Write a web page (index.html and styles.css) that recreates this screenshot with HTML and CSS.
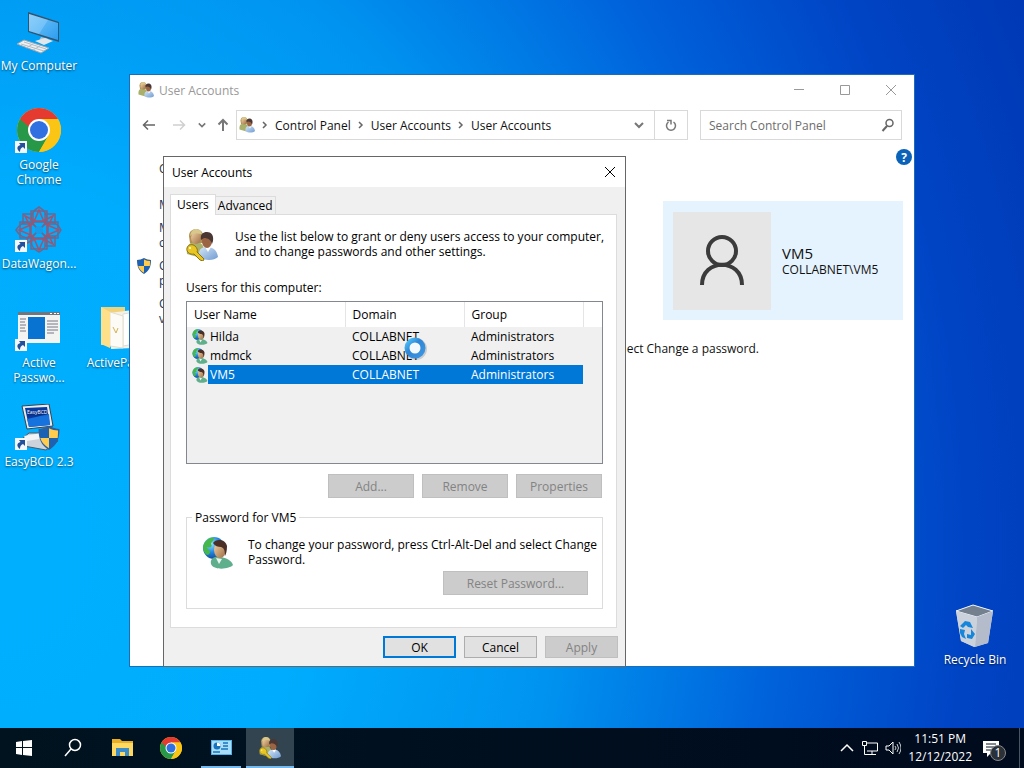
FILE: index.html
```
<!DOCTYPE html>
<html lang="en">
<head>
  <meta charset="UTF-8">
  <meta name="viewport" content="width=device-width, initial-scale=1.0">
  <title>User Accounts</title>
  <link rel="stylesheet" href="styles.css">
</head>
<body>

  <!-- shared icons -->
  <svg class="defs" aria-hidden="true">
    <defs>
      <linearGradient id="skin" x1="0" y1="0" x2="1" y2="1">
        <stop offset="0" stop-color="#f3d3a8"/>
        <stop offset="1" stop-color="#9c6b42"/>
      </linearGradient>
      <linearGradient id="screen" x1="0" y1="0" x2="1" y2="1">
        <stop offset="0" stop-color="#7cc8f8"/>
        <stop offset="1" stop-color="#2b9df0"/>
      </linearGradient>
      <radialGradient id="globe" cx="0.35" cy="0.3" r="0.8">
        <stop offset="0" stop-color="#9be4ff"/>
        <stop offset="0.5" stop-color="#2386dd"/>
        <stop offset="1" stop-color="#0a3a8c"/>
      </radialGradient>
      <linearGradient id="shirt" x1="0" y1="0" x2="1" y2="1">
        <stop offset="0" stop-color="#d5e6f8"/>
        <stop offset="1" stop-color="#6f9bd0"/>
      </linearGradient>
      <linearGradient id="ring" x1="0" y1="0" x2="1" y2="1">
        <stop offset="0" stop-color="#4fc3fa"/>
        <stop offset="0.4" stop-color="#2f86d6"/>
        <stop offset="1" stop-color="#3c95e2"/>
      </linearGradient>
      <symbol id="users" viewBox="0 0 32 32">
        <path d="M1 25c-1-8 2-12 9-12 5 0 8 3 8 9l-3 7z" fill="#a9b06a"/>
        <path d="M3 7c0-5 4-7 7-7s7 2 7 7v7H4z" fill="#b3904f"/>
        <ellipse cx="10" cy="9" rx="5" ry="6" fill="url(#skin)"/>
        <path d="M4 7c1-5 3-7 6-7s6 2 6 6c-3-2-8-3-12 1z" fill="#d8c88c"/>
        <path d="M13 28c-1-7 2-10 8-10 7 0 10 4 11 10-4 4-14 4-19 0z" fill="url(#shirt)"/>
        <path d="M19 18l3 5 3-5z" fill="#fff"/>
        <ellipse cx="21" cy="12" rx="5" ry="7" fill="#9b6544"/>
        <path d="M15 11c-1-6 2-8 6-8s7 3 6 9l-1 3c-1-4-4-6-8-6z" fill="#4a3733"/>
      </symbol>
      <symbol id="userskey" viewBox="0 0 32 32">
        <use href="#users"/>
        <path d="M1 19c1-4 6-4 8-2s3 4 2 6l7 7-1 2-3-1-6-6c-4 1-8-2-7-6z" fill="#e9c622" stroke="#8e730d"/>
        <circle cx="4" cy="19" r="1" fill="#fff"/>
      </symbol>
      <symbol id="globeuser" viewBox="0 0 32 32">
        <circle cx="12" cy="11" r="11" fill="url(#globe)"/>
        <path d="M3 5c3-4 7-5 9-4 0 3-3 4-3 6 2 3-1 4-4 3-1 2 4 3 3 6-2 3-4 2-5 0C0 12 1 8 3 5z" fill="#46b84a"/>
        <path d="M9 27c-1-4 2-8 8-7 7 0 13 4 14 8-3 4-19 6-22-1z" fill="#5fae8c"/>
        <path d="M14 21l3 6 3-5z" fill="#e8f6ef"/>
        <ellipse cx="18" cy="13" rx="6" ry="8" fill="url(#skin)"/>
        <path d="M11 6c3-5 13-4 14 3 0 5-1 8-2 10 0-6-1-8-4-9-3 0-6-1-8-4z" fill="#4b2f26"/>
      </symbol>
      <symbol id="chrome" viewBox="0 0 44 44">
        <circle cx="22" cy="22" r="22" fill="#fbc516"/>
        <path d="M3 11l9.500 16.500L22 22V11h19A22 22 0 0 0 3 11z" fill="#e53a2f"/>
        <path d="M3 11A22 22 0 0 0 22 44l9.500-16.500H22z" fill="#279847"/>
        <path d="M22 44A22 22 0 0 0 41 11H22l9.500 16.500z" fill="#fbc516"/>
        <circle cx="22" cy="22" r="11" fill="#fff"/>
        <circle cx="22" cy="22" r="9" fill="#3070e0"/>
      </symbol>
      <symbol id="shield" viewBox="0 0 16 16">
        <path d="M8 0c2 1 5 2 7 2 0 7-2 11-7 14C3 13 1 9 1 2c2 0 5-1 7-2z" fill="#2d5f9e"/>
        <path d="M8 1.500V8H2.200C2 6 2 4.500 2 3c2 0 4-.5 6-1.500z" fill="#1c62b4"/>
        <path d="M8 1.500V8h5.800c.2-2 .2-3.500.2-5-2 0-4-.5-6-1.500z" fill="#ffcc4d"/>
        <path d="M2.200 8H8v6.800C5 13 3 11 2.200 8z" fill="#ffcc4d"/>
        <path d="M13.800 8H8v6.800c3-1.800 5-3.800 5.800-6.800z" fill="#1c62b4"/>
      </symbol>
      <symbol id="shortcut" viewBox="0 0 12 12">
        <path d="M0 0h12v12H0z" fill="#f4f8fc"/>
        <path d="M4 2h6v6L8 6c-2 1-3 2-3 5C1 8 2 5 5.500 4z" fill="#23509b"/>
      </symbol>
      <symbol id="chevron" viewBox="0 0 8 8">
        <path d="M2 1l3 3-3 3" fill="none" stroke="#666" stroke-width="1.500"/>
      </symbol>
      <symbol id="down" viewBox="0 0 10 10">
        <path d="M1 3l4 4 4-4" fill="none" stroke="#777" stroke-width="2"/>
      </symbol>
      <symbol id="close" viewBox="0 0 12 12">
        <path d="M1 1l10 10M11 1L1 11" fill="none" stroke="currentColor"/>
      </symbol>
    </defs>
  </svg>

  <main class="desktop">
    <div class="icons">
      <a href="#" class="icon">
        <svg class="icon-art" viewBox="0 0 48 48">
          <path d="M13 4l31 10v20L13 24z" fill="#37526b"/>
          <path d="M14 6l29 9v17l-29-9z" fill="url(#screen)"/>
          <path d="M14 6l19 6-9 14-10-3z" fill="#b9e5ff" opacity="0.3"/>
          <path d="M26 29l7 2v4l-9-2z" fill="#b9c4cb"/>
          <path d="M20 33l10-3 8 3-9 4z" fill="#e1e6ea"/>
          <path d="M2 36l7-4 25 8-8 5z" fill="#edf0f2" stroke="#9aa7b0"/>
          <path d="M6 36l23 7M9 34l22 7M11 40l7-4M18 42l7-4" stroke="#b3bdc5"/>
        </svg>
        <span>My Computer</span>
      </a>
      <a href="#" class="icon">
        <svg class="icon-art" viewBox="0 0 48 48">
          <use href="#chrome" x="2" y="1" width="44" height="44"/>
          <use href="#shortcut" x="0" y="34" width="12" height="12"/>
        </svg>
        <span>Google<br>Chrome</span>
      </a>
      <a href="#" class="icon">
        <svg class="icon-art" viewBox="0 0 48 48">
          <g fill="none" stroke="#6b6890" stroke-width="1.500">
            <path d="M24 24C12 14 16 6 24 1c8 5 12 13 0 23z"/>
            <path d="M24 24C12 34 16 42 24 46c8-4 12-12 0-22z"/>
            <path d="M24 24C14 12 6 16 1 24c5 8 13 12 23 0z"/>
            <path d="M24 24c10-12 18-8 22 0-4 8-12 12-22 0z"/>
            <path d="M16 5h16v38H16zM5 16h38v16H5zM8 8h10v10H8zM30 8h10v10H30zM30 30h10v10H30z"/>
          </g>
          <g fill="none" stroke="#a3536c" stroke-width="1.500">
            <path d="M24 4l6 14 14 6-14 6-6 14-6-14-14-6 14-6zM10 10l10 5 8 0 10-5-5 10v8l5 10-10-5h-8l-10 5 5-10v-8z"/>
          </g>
          <circle cx="24" cy="24" r="4" fill="#1a9be8"/>
          <use href="#shortcut" x="0" y="34" width="12" height="12"/>
        </svg>
        <span>DataWagon...</span>
      </a>
      <a href="#" class="icon">
        <svg class="icon-art" viewBox="0 0 48 48">
          <path d="M3 7h42v31H3z" fill="#f3f3f1"/>
          <path d="M3 7h42v3H3z" fill="#6c7780"/>
          <path d="M35 8.500h2M39 8.500h2M42 8.500h2" stroke="#fff"/>
          <path d="M13 12h17v22H13z" fill="#0873d0"/>
          <path d="M5 14h6M5 17h5M5 20h6M5 23h5M5 26h6M32 16h11M32 19h11M32 22h11M32 25h11M32 28h7" stroke="#778"/>
          <use href="#shortcut" x="0" y="34" width="12" height="12"/>
        </svg>
        <span>Active<br>Passwo...</span>
      </a>
      <a href="#" class="icon">
        <svg class="icon-art" viewBox="0 0 48 48">
          <path d="M8 34l6-5h22l7 8-12 9-22-4z" fill="#cdd3da" stroke="#4d5967"/>
          <path d="M9 32l18-3 3 5-18 3z" fill="#f1f4f7"/>
          <path d="M7 2l27-2 4 22-26 3z" fill="#e8edf2" stroke="#35414f"/>
          <path d="M10 4l22-1 3 18-21 2z" fill="#0a3aa0"/>
          <path d="M12 15l22-5 1 11-21 2z" fill="#1672dd"/>
          <text x="12" y="10" class="tube-text">EasyBCD</text>
          <use href="#shield" x="22" y="22" width="24" height="24"/>
          <use href="#shortcut" x="0" y="34" width="12" height="12"/>
        </svg>
        <span>EasyBCD 2.3</span>
      </a>
      <a href="#" class="icon folder">
        <svg class="icon-art" viewBox="0 0 48 48">
          <path d="M10 2h24v38H10z" fill="#f0d27a"/>
          <path d="M18 8l24-3v38l-22 1z" fill="#f4f1e6"/>
          <path d="M32 9l12-2v32l-12 2z" fill="#fff" stroke="#ddd"/>
          <path d="M19 7l13 4v32l-13-2z" fill="#fcfbf6" stroke="#e2ddcb"/>
          <path d="M10 2l9 5v36l-9-4z" fill="#ffe08a"/>
          <path d="M22 22l3 6 2-5" fill="none" stroke="#d3b254"/>
        </svg>
        <span>ActivePa...</span>
      </a>
      <a href="#" class="icon bin">
        <svg class="icon-art" viewBox="0 0 48 48">
          <path d="M5 9l17-6 20 6-5 32-14 4-13-6z" fill="#d3d9e2"/>
          <path d="M5 9l17-6 20 6-16 6z" fill="#75808f" stroke="#eef4fb"/>
          <path d="M26 15l16-6-5 32-13 4z" fill="#b4bccb"/>
          <path d="M5 9l21 6-2 30-14-6z" fill="#ccd2dc"/>
          <path d="M14 19l5 1 3 6-5-1-2-2-3 3-3-2zM9 27l5 1-1 4 2 5-4-2-2-4zM20 27l4 5-3 5-5-1v-4l4 1z" fill="#1686dc"/>
        </svg>
        <span>Recycle Bin</span>
      </a>
    </div>

    <section class="window">
      <header class="titlebar">
        <svg class="small-icon" viewBox="0 0 16 16"><use href="#users" width="16" height="16"/></svg>
        <h1>User Accounts</h1>
        <button class="caption" aria-label="Minimize"><svg viewBox="0 0 12 12"><path d="M1 5.500h10" stroke="currentColor"/></svg></button>
        <button class="caption" aria-label="Maximize"><svg viewBox="0 0 12 12"><path d="M1.500 1.500h9v9h-9z" fill="none" stroke="currentColor"/></svg></button>
        <button class="caption" aria-label="Close"><svg><use href="#close"/></svg></button>
      </header>

      <nav class="navbar">
        <button class="nav-btn" aria-label="Back"><svg viewBox="0 0 14 14"><path d="M13 7H2M6 2.500L1.500 7 6 11.500" fill="none" stroke="#666" stroke-width="1.500"/></svg></button>
        <button class="nav-btn forward" aria-label="Forward"><svg viewBox="0 0 14 14"><path d="M1 7h11M8 2.500L12.500 7 8 11.500" fill="none" stroke="#d0d0d0" stroke-width="1.500"/></svg></button>
        <button class="nav-btn recent" aria-label="Recent locations"><svg><use href="#down"/></svg></button>
        <button class="nav-btn up" aria-label="Up"><svg viewBox="0 0 14 14"><path d="M7 13V2M2.500 6.500L7 2l4.500 4.500" fill="none" stroke="#777" stroke-width="2"/></svg></button>
        <div class="address">
          <svg class="small-icon" viewBox="0 0 16 16"><use href="#users" width="16" height="16"/></svg>
          <svg class="sep"><use href="#chevron"/></svg>
          <a href="#">Control Panel</a>
          <svg class="sep"><use href="#chevron"/></svg>
          <a href="#">User Accounts</a>
          <svg class="sep"><use href="#chevron"/></svg>
          <a href="#">User Accounts</a>
          <button class="history" aria-label="Previous locations"><svg><use href="#down"/></svg></button>
          <button class="refresh" aria-label="Refresh"><svg viewBox="0 0 12 12"><path d="M8.500 3A4.500 4.500 0 1 1 3.500 3M2 1.500h4v4" fill="none" stroke="#777" stroke-width="1.500"/></svg></button>
        </div>
        <div class="search">
          <input type="search" placeholder="Search Control Panel" aria-label="Search Control Panel">
          <svg viewBox="0 0 14 14"><circle cx="8.500" cy="5" r="3.500" fill="none" stroke="#666" stroke-width="1.500"/><path d="M6 8l-4.500 5" stroke="#666" stroke-width="2"/></svg>
        </div>
      </nav>

      <div class="content">
        <aside class="tasks">
          <a href="#" class="home">Control Panel Home</a>
          <a href="#">Manage your credentials</a>
          <a href="#">Manage your file encryption certificates</a>
          <a href="#" class="admin"><svg><use href="#shield"/></svg>Configure advanced user profile properties</a>
          <a href="#">Change my environment variables</a>
        </aside>
        <div class="account">
          <button class="help" aria-label="Help">?</button>
          <div class="tile">
            <svg class="avatar" viewBox="0 0 98 98">
              <g fill="none" stroke="#3b3b3b" stroke-width="4">
                <circle cx="49" cy="39" r="14"/>
                <path d="M29 73c0-27 40-27 40 0"/>
              </g>
            </svg>
            <div>
              <h2>VM5</h2>
              <p>COLLABNET\VM5</p>
            </div>
          </div>
          <p class="hint">To change your password, press Ctrl+Alt+Del and select Change a password.</p>
        </div>
      </div>
    </section>

    <section class="dialog" role="dialog" aria-labelledby="dialogTitle">
      <header class="dialog-title">
        <h2 id="dialogTitle">User Accounts</h2>
        <button class="caption" aria-label="Close"><svg><use href="#close"/></svg></button>
      </header>

      <div class="tabs" role="tablist">
        <button class="tab active" role="tab" aria-selected="true">Users</button>
        <button class="tab" role="tab" aria-selected="false">Advanced</button>
      </div>

      <div class="page">
        <div class="intro">
          <svg><use href="#userskey"/></svg>
          <p>Use the list below to grant or deny users access to your computer,<br>and to change passwords and other settings.</p>
        </div>

        <p class="list-label" id="listLabel">Users for this computer:</p>
        <div class="list">
          <table aria-labelledby="listLabel">
            <thead>
              <tr><th>User Name</th><th>Domain</th><th>Group</th><th class="rest"></th></tr>
            </thead>
            <tbody>
              <tr><td><svg><use href="#globeuser"/></svg>Hilda</td><td>COLLABNET</td><td>Administrators</td></tr>
              <tr><td><svg><use href="#globeuser"/></svg>mdmck</td><td>COLLABNET</td><td>Administrators</td></tr>
              <tr class="selected"><td><svg><use href="#globeuser"/></svg>VM5</td><td>COLLABNET</td><td>Administrators</td></tr>
            </tbody>
          </table>
          <svg class="busy" viewBox="0 0 24 24">
            <circle cx="13" cy="13" r="8" fill="none" stroke="#000" stroke-width="6" opacity="0.15"/>
            <circle cx="12" cy="12" r="8" fill="#f4f9fd" stroke="url(#ring)" stroke-width="5"/>
          </svg>
        </div>

        <div class="actions">
          <button class="btn" disabled>Add...</button>
          <button class="btn" disabled>Remove</button>
          <button class="btn" disabled>Properties</button>
        </div>

        <fieldset>
          <legend>Password for VM5</legend>
          <div class="password">
            <svg><use href="#globeuser"/></svg>
            <p>To change your password, press Ctrl-Alt-Del and select Change<br>Password.</p>
          </div>
          <button class="btn reset" disabled>Reset Password...</button>
        </fieldset>
      </div>

      <footer class="dialog-buttons">
        <button class="btn default">OK</button>
        <button class="btn">Cancel</button>
        <button class="btn" disabled>Apply</button>
      </footer>
    </section>
  </main>

  <footer class="taskbar">
    <button class="task" aria-label="Start"><svg viewBox="0 0 24 24"><path d="M4 6l6-1v6H4zM11 5l9-1v7h-9zM4 12h6v7l-6-1zM11 12h9v8l-9-1z" fill="#fff"/></svg></button>
    <button class="task" aria-label="Search"><svg viewBox="0 0 24 24"><circle cx="14" cy="9" r="5.500" fill="none" stroke="#fff" stroke-width="1.500"/><path d="M10 13l-6 7" stroke="#fff" stroke-width="1.500"/></svg></button>
    <button class="task" aria-label="File Explorer"><svg viewBox="0 0 24 24"><path d="M2 3h8l2 2h11v15H2z" fill="#e9ad27"/><path d="M2 7h21v13H2z" fill="#ffd862"/><path d="M6 12h13v8h-4v-4h-5v4H6z" fill="#3b8cc9"/></svg></button>
    <button class="task" aria-label="Google Chrome"><svg viewBox="0 0 24 24"><use href="#chrome" x="1" y="1" width="22" height="22"/></svg></button>
    <button class="task open" aria-label="Control Panel"><svg viewBox="0 0 24 24"><path d="M2 4h21v15H2z" fill="#50b5ee"/><path d="M3 5h19v13H3z" fill="#a9ddfa"/><circle cx="8" cy="10" r="3.500" fill="#1773bd"/><path d="M8 10V6.500a3.500 3.500 0 0 1 3.500 3.500z" fill="#fff"/><path d="M14 7h5M14 10h5M12 13h7M4 16h7" stroke="#1773bd" stroke-width="1.500"/></svg></button>
    <button class="task open current" aria-label="User Accounts"><svg viewBox="0 0 24 24"><use href="#userskey" x="1" y="1" width="22" height="22"/></svg></button>

    <div class="tray">
      <svg viewBox="0 0 16 16"><path d="M2 11l6-6 6 6" fill="none" stroke="#fff" stroke-width="1.500"/></svg>
      <svg viewBox="0 0 16 16"><path d="M4 3h11.500v8H5M10 11v3M6 14.500h8M.5 1.500h4v4h-4zM2.500 6v8.500H6" fill="none" stroke="#fff"/></svg>
      <svg viewBox="0 0 16 16"><path d="M1 6h3l4-4v12l-4-4H1z" fill="none" stroke="#fff"/><path d="M10 6q2 2 0 4M12 4q3 4 0 8M14 2q4 6 0 12" fill="none" stroke="#ccc"/></svg>
      <time class="clock" datetime="2022-12-12T23:51">11:51 PM<br>12/12/2022</time>
      <button class="notify" aria-label="1 new notification">
        <svg viewBox="0 0 18 18"><path d="M1 2h16v12H9l-4 4v-4H1z" fill="#fff"/><path d="M4 5h10M4 8h10M4 11h7" stroke="#0b1524"/></svg>
        <span class="badge">1</span>
      </button>
      <button class="show-desktop" aria-label="Show desktop"></button>
    </div>
  </footer>

</body>
</html>
```
FILE: styles.css
```
* {
  box-sizing: border-box;
}

body {
  margin: 0;
  height: 100vh;
  display: flex;
  flex-direction: column;
  overflow: hidden;
  font-family: "Open Sans", "Noto Sans", sans-serif;
  font-size: 12px;
  line-height: 15px;
  color: #111;
}

h1, h2, p {
  margin: 0;
  font-size: 12px;
  font-weight: normal;
}

a {
  color: inherit;
  text-decoration: none;
}

button {
  font: inherit;
  color: inherit;
  padding: 0;
  border: none;
  background: none;
}

svg {
  display: block;
  flex: none;
}

.defs {
  position: absolute;
  width: 0;
  height: 0;
}

/* desktop */
.desktop {
  flex: 1;
  position: relative;
  overflow: hidden;
  background: radial-gradient(ellipse 115% 190% at 0% 75%, #00b0ff 0%, #00acfd 26%, #0094f0 47%, #0060da 67%, #0044c4 82%, #0038b4 96%);
}

.icons {
  display: grid;
  grid-template-columns: 78px 74px 1fr 98px;
  grid-template-rows: repeat(7, 99px);
  grid-auto-flow: column;
  padding-top: 8px;
}

.icon {
  display: flex;
  flex-direction: column;
  align-items: center;
  color: #fff;
  text-align: center;
  white-space: nowrap;
  text-shadow: 0 1px 2px rgba(0, 0, 0, 0.6);
}

.icon-art {
  width: 48px;
  height: 48px;
  margin-bottom: 2px;
}

.folder {
  grid-column: 2;
  grid-row: 4;
}

.bin {
  grid-column: 4;
  grid-row: 7;
}

.tube-text {
  font-size: 5px;
  fill: #fff;
}

/* control panel window */
.window {
  position: absolute;
  top: 74px;
  left: 129px;
  right: 109px;
  bottom: 61px;
  background: #fff;
  border: 1px solid #1c6db5;
}

.titlebar {
  display: flex;
  align-items: center;
  height: 30px;
  padding-left: 8px;
  color: #999;
}

.titlebar h1 {
  flex: 1;
  margin-left: 5px;
}

.small-icon {
  width: 16px;
  height: 16px;
}

.caption {
  width: 46px;
  height: 30px;
  display: flex;
  align-items: center;
  justify-content: center;
}

.caption svg {
  width: 12px;
  height: 12px;
}

.navbar {
  display: flex;
  align-items: center;
  height: 40px;
  padding: 0 12px;
}

.nav-btn {
  width: 14px;
  margin-right: 16px;
}

.nav-btn svg {
  width: 14px;
  height: 14px;
}

.forward {
  margin-right: 12px;
}

.recent {
  width: 8px;
  margin-right: 10px;
}

.recent svg {
  width: 8px;
  height: 10px;
}

.up {
  margin-right: 6px;
}

.address {
  flex: 1;
  display: flex;
  align-items: center;
  height: 30px;
  padding-left: 2px;
  border: 1px solid #d9d9d9;
}

.sep {
  width: 8px;
  height: 8px;
  margin: 0 6px;
}

.history {
  margin-left: auto;
  padding: 0 10px;
}

.history svg {
  width: 10px;
  height: 10px;
}

.refresh {
  width: 33px;
  height: 28px;
  display: flex;
  align-items: center;
  justify-content: center;
  border-left: 1px solid #d9d9d9;
}

.refresh svg {
  width: 12px;
  height: 12px;
}

.search {
  display: flex;
  align-items: center;
  width: 202px;
  height: 30px;
  margin-left: 12px;
  padding: 0 6px 0 8px;
  border: 1px solid #d9d9d9;
}

.search input {
  flex: 1;
  min-width: 0;
  padding: 0;
  border: none;
  outline: none;
  font: inherit;
  background: none;
}

.search input::placeholder {
  color: #6d6d6d;
}

.search svg {
  width: 14px;
  height: 14px;
}

.content {
  display: flex;
}

.tasks {
  width: 190px;
  padding: 16px 0 0 29px;
  color: #223355;
}

.tasks a {
  display: block;
  margin-bottom: 8px;
}

.tasks .home {
  margin-bottom: 21px;
  color: #333;
}

.admin {
  position: relative;
}

.admin svg {
  position: absolute;
  left: -23px;
  width: 16px;
  height: 16px;
}

.account {
  flex: 1;
  display: flex;
  flex-direction: column;
  align-items: flex-end;
  padding: 4px 11px 0 0;
}

.help {
  width: 16px;
  height: 16px;
  margin-right: -9px;
  border-radius: 50%;
  background: #0a63b8;
  color: #fff;
  font-weight: bold;
}

.tile {
  display: flex;
  align-items: center;
  width: 240px;
  height: 119px;
  margin-top: 36px;
  padding-left: 10px;
  background: #e5f3fe;
}

.avatar {
  width: 98px;
  height: 98px;
  margin-right: 11px;
  background: #e6e6e6;
}

.tile h2 {
  font-size: 15px;
  line-height: 18px;
}

.hint {
  margin: 21px 144px 0 0;
}

/* user accounts dialog */
.dialog {
  position: absolute;
  top: 156px;
  left: 163px;
  width: 463px;
  background: #f0f0f0;
  border: 1px solid #666;
  color: #000;
}

.dialog-title {
  display: flex;
  align-items: center;
  justify-content: space-between;
  height: 30px;
  padding-left: 8px;
  background: #fff;
}

.dialog-title .caption {
  width: 30px;
}

.tabs {
  display: flex;
  align-items: flex-end;
  height: 27px;
  padding-left: 6px;
}

.tab {
  height: 18px;
  padding: 0 2px;
  border: 1px solid #dcdcdc;
  border-bottom: none;
}

.tab.active {
  height: 21px;
  padding: 0 6px 2px;
  margin-right: -1px;
  margin-bottom: -1px;
  background: #fff;
  z-index: 1;
}

.page {
  margin: 0 8px 0 6px;
  padding: 14px 13px 18px 15px;
  background: #fff;
  border: 1px solid #dcdcdc;
}

.intro {
  display: flex;
  height: 50px;
  white-space: nowrap;
}

.intro svg {
  width: 32px;
  height: 32px;
  margin-right: 17px;
}

.list-label {
  margin: 1px 0 6px;
}

.list {
  position: relative;
  height: 163px;
  background: #f0f0f0;
  border: 1px solid #828790;
}

table {
  width: 100%;
  table-layout: fixed;
  border-collapse: collapse;
}

th {
  width: 119px;
  height: 25px;
  padding: 0 7px;
  background: #fff;
  border-right: 1px solid #e5e5e5;
  font-weight: normal;
  text-align: left;
}

th:first-child {
  width: 158px;
}

.rest {
  width: auto;
  border-right: none;
}

td {
  height: 19px;
  padding: 0 7px;
}

td:first-child {
  display: flex;
  align-items: center;
  padding-left: 5px;
}

td svg {
  width: 16px;
  height: 16px;
  margin-right: 2px;
}

.selected {
  color: #fff;
}

.selected td {
  background: #0078d7;
}

.selected td:first-child {
  background: linear-gradient(to right, transparent 21px, #0078d7 21px);
}

.busy {
  position: absolute;
  top: 34px;
  left: 216px;
  width: 24px;
  height: 24px;
}

.actions {
  display: flex;
  justify-content: flex-end;
  gap: 8px;
  margin: 10px 1px 12px 0;
}

.btn {
  width: 73px;
  height: 22px;
  background: #e1e1e1;
  border: 1px solid #adadad;
}

.btn:disabled {
  background: #ccc;
  border-color: #bfbfbf;
  color: #838383;
}

.btn.default {
  border: 2px solid #0078d7;
}

.actions .btn {
  width: 86px;
  height: 24px;
}

fieldset {
  margin: 0;
  min-width: 0;
  height: 99px;
  padding: 12px 14px 14px 15px;
  border: 1px solid #dcdcdc;
}

legend {
  margin-left: -10px;
  padding: 0 3px;
}

.password {
  display: flex;
  white-space: nowrap;
}

.password svg {
  width: 32px;
  height: 32px;
  margin-right: 14px;
}

.btn.reset {
  display: block;
  width: 145px;
  height: 24px;
  margin: 2px 0 0 auto;
}

.dialog-buttons {
  display: flex;
  justify-content: flex-end;
  gap: 8px;
  padding: 8px 7px;
}

/* taskbar */
.taskbar {
  display: flex;
  height: 40px;
  background: linear-gradient(to right, #00131f, #000b1e);
  color: #fff;
}

.task {
  display: flex;
  align-items: center;
  justify-content: center;
  width: 48px;
  margin-right: 1px;
}

.task svg {
  width: 24px;
  height: 24px;
}

.open {
  width: 40px;
  margin: 0 5px;
  padding-top: 2px;
  border-bottom: 2px solid #76b9ed;
}

.current {
  width: 48px;
  margin: 0;
  background: #32444f;
}

.tray {
  display: flex;
  align-items: center;
  gap: 7px;
  margin-left: auto;
}

.tray svg {
  width: 16px;
  height: 16px;
}

.clock {
  line-height: 18px;
  text-align: center;
}

.notify {
  position: relative;
  margin: 0 12px 0 3px;
}

.tray .notify svg {
  width: 18px;
  height: 18px;
}

.badge {
  position: absolute;
  top: 6px;
  left: 8px;
  width: 16px;
  height: 16px;
  border: 1px solid #888;
  border-radius: 50%;
  background: #2b3138;
  line-height: 14px;
}

.show-desktop {
  width: 5px;
  height: 40px;
  border-left: 1px solid #4a5564;
}
```
